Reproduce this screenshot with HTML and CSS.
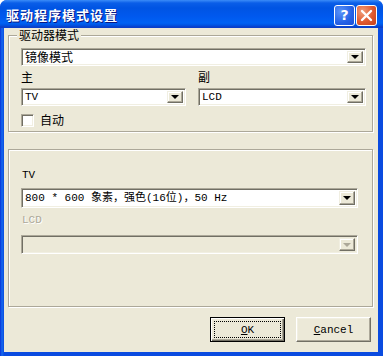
FILE: index.html
```html
<!DOCTYPE html>
<html lang="zh-CN">
<head>
  <meta charset="UTF-8" />
  <title>驱动程序模式设置</title>
  <link rel="stylesheet" href="styles.css">
</head>
<body>
  <div class="window">
    <div class="titlebar">
      <span class="title">驱动程序模式设置</span>
      <div class="caption-btns">
        <span class="cap-btn help">?</span>
        <span class="cap-btn close">
          <svg width="13" height="13" viewBox="0 0 13 13"><path d="M2 2 L11 11 M11 2 L2 11" stroke="#fff" stroke-width="2.4" stroke-linecap="round"/></svg>
        </span>
      </div>
    </div>

    <div class="client">
      <div class="group group-mode">
        <span class="legend">驱动器模式</span>
        <div class="combo combo-wide"><span class="val cjk">镜像模式</span><span class="drop"><i></i></span></div>
        <div class="pair">
          <div>
            <label class="lbl">主</label>
            <div class="combo"><span class="val">TV</span><span class="drop"><i></i></span></div>
          </div>
          <div>
            <label class="lbl">副</label>
            <div class="combo"><span class="val">LCD</span><span class="drop"><i></i></span></div>
          </div>
        </div>
        <div class="check-row">
          <span class="checkbox"></span>
          <span class="lbl">自动</span>
        </div>
      </div>

      <div class="group group-res">
        <div class="lat-lbl">TV</div>
        <div class="combo combo-tall"><span class="val">800 * 600 象素，强色(16位)，50 Hz</span><span class="drop"><i></i></span></div>
        <div class="lat-lbl disabled">LCD</div>
        <div class="combo combo-off"><span class="val"></span><span class="drop"><i></i></span></div>
      </div>

      <div class="actions">
        <button class="btn default"><span class="focus"><u>O</u>K</span></button>
        <button class="btn"><span><u>C</u>ancel</span></button>
      </div>
    </div>
  </div>
</body>
</html>
```

FILE: styles.css
```css
body {
  margin: 0;
  background: #fff;
}
.window {
  width: 383px;
  height: 356px;
  background: linear-gradient(to right, #0831d9, #166aee 2px, #0a4be0 4px);
  border-radius: 7px 7px 0 0;
  display: flex;
  flex-direction: column;
  overflow: hidden;
  font-family: "Noto Sans CJK SC", sans-serif;
  font-size: 12px;
  color: #000;
}
.titlebar {
  height: 28px;
  flex: none;
  display: flex;
  align-items: center;
  justify-content: space-between;
  padding: 0 6px 0 6px;
  background: linear-gradient(#3b8cf8 0, #0a5ee8 3px, #0054e3 8px, #0058ee 16px, #0062f4 23px, #0055e5 25px, #0a3fc9 27px, #0a3fc9 28px);
}
.title {
  color: #fff;
  font-weight: bold;
  font-size: 13px;
  letter-spacing: 1px;
  text-shadow: 1px 1px 0 #0a1883;
}
.caption-btns {
  display: flex;
  gap: 1px;
  margin-top: 2px;
}
.cap-btn {
  width: 19px;
  height: 19px;
  border: 1px solid #fff;
  border-radius: 3px;
  display: flex;
  align-items: center;
  justify-content: center;
  color: #fff;
  font-family: "DejaVu Sans", sans-serif;
  font-weight: bold;
  font-size: 14px;
}
.help {
  background: radial-gradient(circle at 30% 30%, #5b94f8, #2461e6 60%, #1b4fd6);
}
.close {
  background: radial-gradient(circle at 30% 30%, #f0a07c, #e0592f 55%, #c4401d);
}
.client {
  flex: 1;
  margin: 0 5px 4px 4px;
  background: #ece9d8;
  padding: 7px 0 0 4px;
  display: flex;
  flex-direction: column;
}
.group {
  position: relative;
  width: 365px;
  box-sizing: border-box;
  border: 1px solid #aca899;
  box-shadow: 1px 1px 0 #fff, inset 1px 1px 0 #fff;
}
.group-mode {
  height: 97px;
  padding: 12px 6px 0 12px;
}
.group-res {
  height: 158px;
  margin-top: 17px;
  padding: 18px 14px 0 12px;
}
.legend {
  position: absolute;
  top: -8px;
  left: 8px;
  padding: 0 2px;
  line-height: 14px;
  background: #ece9d8;
}
.lbl {
  display: block;
  line-height: 14px;
}
.lat-lbl {
  font-family: "Liberation Mono", monospace;
  font-size: 11px;
  line-height: 14px;
  padding-left: 1px;
}
.lat-lbl.disabled {
  color: #aca899;
  text-shadow: 1px 1px 0 #fff;
  margin-top: 5px;
}
.combo {
  height: 18px;
  box-sizing: border-box;
  display: flex;
  align-items: stretch;
  background: #fff;
  border: 1px solid;
  border-color: #aca899 #fff #fff #aca899;
  box-shadow: inset 1px 1px 0 #716f64, inset -1px -1px 0 #f1efe2;
  padding: 2px;
}
.val {
  flex: 1;
  padding-left: 1px;
  font-family: "Liberation Mono", "Noto Sans CJK SC", monospace;
  font-size: 11px;
  line-height: 12px;
  white-space: nowrap;
}
.val.cjk {
  font-family: "Noto Sans CJK SC", sans-serif;
  font-size: 12px;
}
.drop {
  width: 16px;
  box-sizing: border-box;
  display: flex;
  align-items: center;
  justify-content: center;
  background: #ece9d8;
  border: 1px solid;
  border-color: #f1efe2 #716f64 #716f64 #f1efe2;
  box-shadow: inset -1px -1px 0 #aca899, inset 1px 1px 0 #fff;
}
.drop i {
  width: 0;
  height: 0;
  border-left: 4px solid transparent;
  border-right: 4px solid transparent;
  border-top: 4px solid #000;
}
.combo-wide {
  width: 345px;
}
.pair {
  display: grid;
  grid-template-columns: 165px 168px;
  column-gap: 12px;
  margin-top: 4px;
}
.pair .combo {
  margin-top: 4px;
}
.check-row {
  display: flex;
  align-items: center;
  gap: 6px;
  margin-top: 7px;
}
.checkbox {
  width: 13px;
  height: 13px;
  box-sizing: border-box;
  background: #fff;
  border: 1px solid;
  border-color: #aca899 #fff #fff #aca899;
  box-shadow: inset 1px 1px 0 #716f64, inset -1px -1px 0 #f1efe2;
}
.combo-tall {
  height: 20px;
  margin-top: 6px;
}
.combo-tall .val {
  line-height: 14px;
}
.combo-off {
  height: 19px;
  margin-top: 8px;
  background: #ece9d8;
}
.combo-off .drop i {
  border-top-color: #aca899;
}
.actions {
  display: flex;
  justify-content: flex-end;
  gap: 11px;
  margin-top: 10px;
  padding-right: 7px;
}
.btn {
  width: 75px;
  height: 25px;
  box-sizing: border-box;
  padding: 3px;
  margin: 0;
  background: #ece9d8;
  border: 1px solid;
  border-color: #fff #716f64 #716f64 #fff;
  box-shadow: inset -1px -1px 0 #aca899, inset 1px 1px 0 #f1efe2;
  font-family: "Liberation Mono", monospace;
  font-size: 11px;
  color: #000;
  display: flex;
  align-items: center;
  justify-content: center;
}
.btn.default {
  border: 1px solid #000;
  box-shadow: inset 1px 1px 0 #fff, inset -1px -1px 0 #716f64, inset -2px -2px 0 #aca899;
}
.btn span {
  flex: 1;
  align-self: stretch;
  display: flex;
  align-items: center;
  justify-content: center;
}
.focus {
  outline: 1px dotted #000;
  outline-offset: -1px;
}
```
